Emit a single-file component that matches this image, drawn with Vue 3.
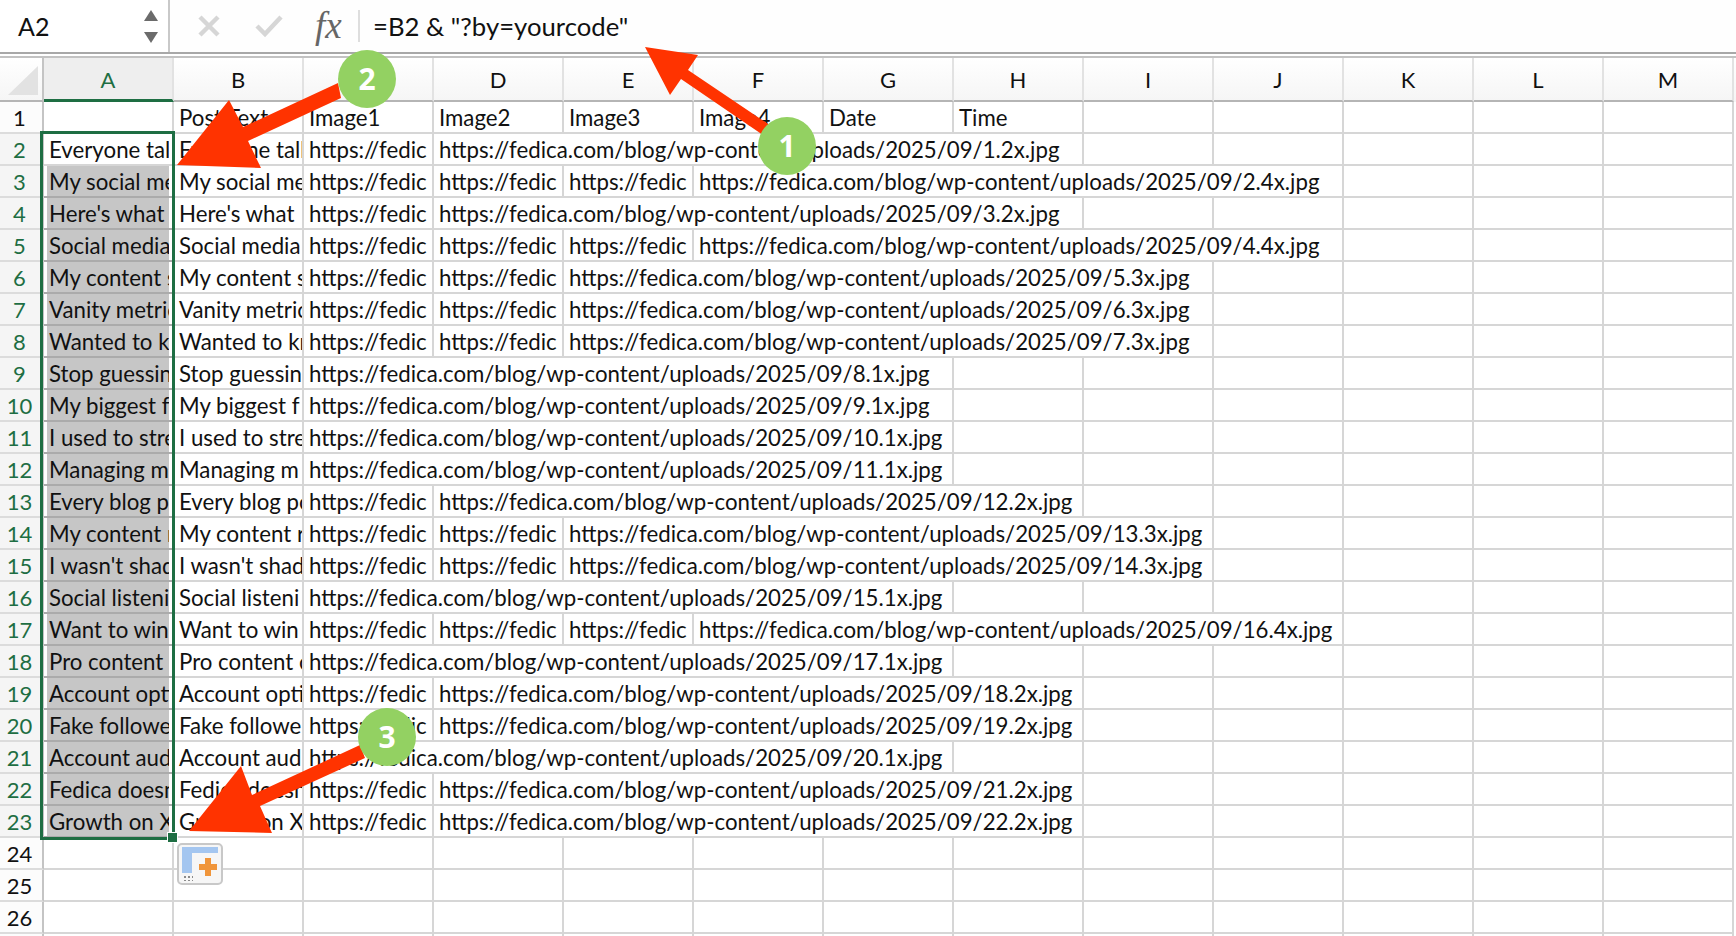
<script setup>
const columns = ['A', 'B', 'C', 'D', 'E', 'F', 'G', 'H', 'I', 'J', 'K', 'L', 'M']
const posts = [
  ['Everyone talks', 2], ['My social media', 4], ["Here's what", 2], ['Social media', 4],
  ['My content s', 3], ['Vanity metrics', 3], ['Wanted to kn', 3], ['Stop guessing', 1],
  ['My biggest f', 1], ['I used to stre', 1], ['Managing m', 1], ['Every blog po', 2],
  ['My content r', 3], ["I wasn't shad", 3], ['Social listeni', 1], ['Want to win', 4],
  ['Pro content c', 1], ['Account opti', 2], ['Fake followe', 2], ['Account audi', 1],
  ['Fedica doesn', 2], ['Growth on X', 2]
]
const url = (i, n) => `https://fedica.com/blog/wp-content/uploads/2025/09/${i}.${n}x.jpg`
const rows = posts.map(([text, n], idx) => {
  const full = url(idx + 1, n)
  const cells = [{ text }]
  for (let j = 0; j < n - 1; j++) cells.push({ text: 'https://fedic' })
  cells.push({ text: full, span: 5 })
  for (let j = 0; j < 7 - n; j++) cells.push({ text: '' })
  return { num: idx + 2, a: text, cells }
})
const firstRow = ['Post Text', 'Image1', 'Image2', 'Image3', 'Image4', 'Date', 'Time', '', '', '', '', '']
const emptyRows = [24, 25, 26, '']
const blanks = 12
</script>

<template>
  <div class="sheet">
    <header class="formula-bar">
      <div class="name-box">
        <span class="name">A2</span>
        <span class="stepper"><i class="up"></i><i class="down"></i></span>
      </div>
      <div class="actions">
        <svg class="ic-x" width="24" height="24" viewBox="0 0 24 24"><path d="M3 3 21 21M21 3 3 21" stroke="#d6d6d6" stroke-width="4.5" fill="none"/></svg>
        <svg class="ic-check" width="30" height="24" viewBox="0 0 30 24"><path d="M3 12 11 20 27 3" stroke="#d6d6d6" stroke-width="4.5" fill="none"/></svg>
        <span class="fx">fx</span>
      </div>
      <div class="formula">=B2 &amp; "?by=yourcode"</div>
    </header>

    <main class="grid-wrap">
      <div class="row head-row">
        <div class="corner"><svg width="42" height="41" viewBox="0 0 42 41"><path d="M8 37 38 8V37Z" fill="#e2e2e2"/></svg></div>
        <div v-for="c in columns" :key="c" class="col-head" :class="{ active: c === 'A' }">{{ c }}</div>
      </div>

      <div class="row">
        <div class="row-head">1</div>
        <div class="cell"></div>
        <div v-for="(t, i) in firstRow" :key="i" class="cell">{{ t }}</div>
      </div>

      <div v-for="r in rows" :key="r.num" class="row">
        <div class="row-head on">{{ r.num }}</div>
        <div class="cell cell-a" :class="{ filled: r.num > 2 }"><span class="fill">{{ r.a }}</span></div>
        <div
          v-for="(c, i) in r.cells"
          :key="i"
          class="cell"
          :style="c.span ? { gridColumn: 'span ' + c.span } : null"
        >{{ c.text }}</div>
      </div>

      <div v-for="n in emptyRows" :key="n" class="row">
        <div class="row-head">{{ n }}</div>
        <div class="cell"></div>
        <div v-for="k in blanks" :key="k" class="cell"></div>
      </div>

      <div class="selection"><span class="handle"></span></div>
      <div class="paste">
        <span class="p-top"></span>
        <span class="p-left"></span>
        <span class="p-dots"></span>
        <svg class="p-plus" width="20" height="20" viewBox="0 0 20 20"><path d="M7 1h6v6h6v6h-6v6H7v-6H1V7h6Z" fill="#f0953a"/></svg>
      </div>
    </main>

    <svg class="callouts" width="1736" height="936" viewBox="0 0 1736 936">
      <path d="M645 47 698 55 688 70 792 140 785 150 681 79 670 95Z" fill="#ff3300"/>
      <path d="M177 165 229 100 243 127 338 83 341 98 248 141 261 168Z" fill="#ff3300"/>
      <path d="M189 831 241 766 252 795 360 745 365 758 260 806 272 833Z" fill="#ff3300"/>
      <g fill="#93d162">
        <circle cx="787" cy="146" r="29"/>
        <circle cx="367" cy="79" r="29"/>
        <circle cx="387" cy="737" r="29"/>
      </g>
      <g class="badge-num" fill="#fff" text-anchor="middle">
        <text x="787" y="157">1</text>
        <text x="367" y="90">2</text>
        <text x="387" y="748">3</text>
      </g>
    </svg>
  </div>
</template>

<style scoped>
.sheet {
  position: relative;
  width: 1736px;
  height: 936px;
  overflow: hidden;
  background: #fff;
  font-family: Lato, "Liberation Sans", sans-serif;
  color: #111;
}
.formula-bar {
  display: flex;
  height: 52px;
  background: #fefefe;
  border-bottom: 2px solid #a8a8a8;
  box-sizing: content-box;
}
.name-box {
  display: flex;
  align-items: center;
  justify-content: space-between;
  box-sizing: border-box;
  width: 170px;
  padding: 0 10px 0 18px;
  background: #fff;
  border-right: 2px solid #c9c9c9;
}
.name { font-size: 25px; }
.stepper { display: flex; flex-direction: column; gap: 11px; }
.stepper i { display: block; width: 0; height: 0; border-left: 7px solid transparent; border-right: 7px solid transparent; }
.stepper .up { border-bottom: 11px solid #6b6b6b; }
.stepper .down { border-top: 11px solid #6b6b6b; }
.actions {
  display: flex;
  align-items: center;
  box-sizing: border-box;
  width: 190px;
  height: 32px;
  margin-top: 10px;
  padding-left: 27px;
  border-right: 2px solid #dedede;
}
.ic-x { margin-right: 33px; }
.ic-check { margin-right: 31px; }
.fx {
  font-family: "Liberation Serif", serif;
  font-style: italic;
  font-size: 37px;
  line-height: 32px;
  color: #666;
}
.formula {
  margin-left: 13px;
  font-size: 25.7px;
  line-height: 52px;
  white-space: nowrap;
}
.grid-wrap {
  position: relative;
  border-top: 2px solid #fff;
}
.row {
  display: grid;
  grid-template-columns: 44px repeat(13, 130px) 1fr;
  grid-auto-rows: 32px;
  font-size: 22.25px;
}
.head-row {
  grid-auto-rows: 44px;
  border-top: 2px solid #c2c2c2;
  background: linear-gradient(#fff, #f5f5f5);
}
.corner { border-right: 2px solid #c4c4c4; border-bottom: 2px solid #b5b5b5; box-sizing: border-box; }
.corner svg { display: block; }
.col-head {
  box-sizing: border-box;
  text-align: center;
  line-height: 44px;
  font-size: 22px;
  border-right: 2px solid #e2e2e2;
  border-bottom: 2px solid #b5b5b5;
}
.col-head.active {
  background: #eeeeee;
  color: #1e6e43;
  border-bottom: 3px solid #1e6e43;
}
.row-head {
  box-sizing: border-box;
  padding-right: 3px;
  text-align: center;
  line-height: 32px;
  font-size: 22px;
  background: #fcfcfc;
  border-right: 2px solid #c4c4c4;
  border-bottom: 2px solid #dcdcdc;
}
.row-head.on { background: #f5f5f5; color: #1e6e43; }
.cell {
  box-sizing: border-box;
  min-width: 0;
  overflow: hidden;
  padding-left: 5px;
  white-space: nowrap;
  line-height: 32px;
  border-right: 2px solid #d6d6d6;
  border-bottom: 2px solid #d6d6d6;
}
.cell-a { padding: 0 3px; border-right-color: transparent; }
.cell-a .fill {
  display: block;
  height: 100%;
  padding-left: 2px;
  overflow: hidden;
}
.cell-a.filled { border-bottom-color: #ababab; }
.cell-a.filled .fill { background: #c6c6c6; }
.selection {
  position: absolute;
  left: 40px;
  top: 75px;
  width: 135px;
  height: 709px;
  box-sizing: border-box;
  border: 3.5px solid #1e6e43;
}
.handle {
  position: absolute;
  right: -6px;
  bottom: -6px;
  width: 9px;
  height: 9px;
  background: #1e6e43;
  border: 1px solid #fff;
}
.paste {
  position: absolute;
  left: 177px;
  top: 787px;
  width: 46px;
  height: 42px;
  box-sizing: border-box;
  border: 2px solid #c8c8c8;
  border-radius: 5px;
  background: #f6f6f6;
}
.p-top { position: absolute; left: 3px; top: 2px; width: 36px; height: 6px; background: #a4c6f0; }
.p-left { position: absolute; left: 3px; top: 2px; width: 10px; height: 26px; background: #a4c6f0; }
.p-dots {
  position: absolute;
  left: 4px;
  top: 30px;
  width: 10px;
  height: 6px;
  background-image: radial-gradient(#8a8a8a 1px, transparent 1.2px);
  background-size: 4px 4px;
}
.p-plus { position: absolute; left: 19px; top: 12px; }
.callouts {
  position: absolute;
  left: 0;
  top: 0;
  pointer-events: none;
}
.badge-num {
  font-family: "Open Sans", sans-serif;
  font-weight: 700;
  font-size: 30px;
}
</style>
